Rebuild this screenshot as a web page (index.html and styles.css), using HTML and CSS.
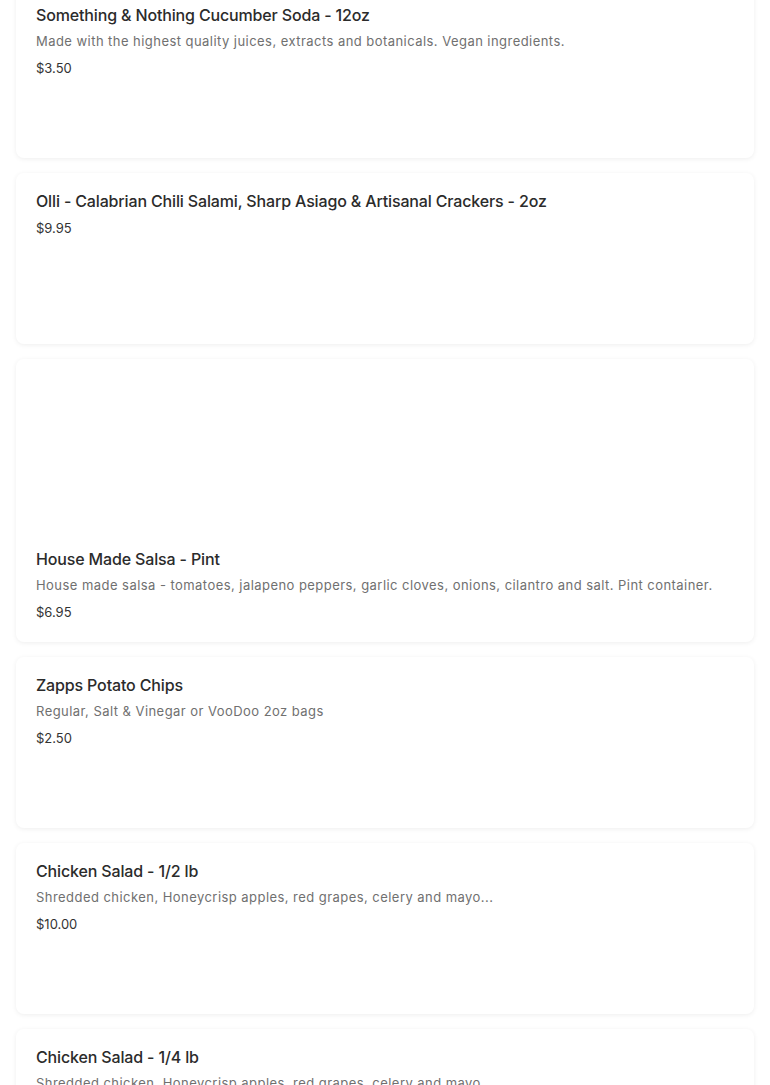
FILE: index.html
```html
<!DOCTYPE html>
<html lang="en">
<head>
  <meta charset="UTF-8" />
  <title>Menu</title>
  <link rel="stylesheet" href="styles.css">
</head>
<body>

  <div class="menu">
    <div class="item">
      <p class="title">Something &amp; Nothing Cucumber Soda - 12oz</p>
      <p class="desc">Made with the highest quality juices, extracts and botanicals. Vegan ingredients.</p>
      <p class="price">$3.50</p>
    </div>

    <div class="item">
      <p class="title">Olli - Calabrian Chili Salami, Sharp Asiago &amp; Artisanal Crackers - 2oz</p>
      <p class="price">$9.95</p>
    </div>

    <div class="item with-photo">
      <div class="photo"></div>
      <p class="title">House Made Salsa - Pint</p>
      <p class="desc">House made salsa - tomatoes, jalapeno peppers, garlic cloves, onions, cilantro and salt. Pint container.</p>
      <p class="price">$6.95</p>
    </div>

    <div class="item">
      <p class="title">Zapps Potato Chips</p>
      <p class="desc">Regular, Salt &amp; Vinegar or VooDoo 2oz bags</p>
      <p class="price">$2.50</p>
    </div>

    <div class="item">
      <p class="title">Chicken Salad - 1/2 lb</p>
      <p class="desc">Shredded chicken, Honeycrisp apples, red grapes, celery and mayo...</p>
      <p class="price">$10.00</p>
    </div>

    <div class="item">
      <p class="title">Chicken Salad - 1/4 lb</p>
      <p class="desc">Shredded chicken, Honeycrisp apples, red grapes, celery and mayo...</p>
      <p class="price">$6.00</p>
    </div>
  </div>

</body>
</html>
```

FILE: styles.css
```css
body {
  margin: 0;
  background: #fff;
  font-family: "Inter", "Liberation Sans", sans-serif;
  color: #2b2b2b;
}
.menu {
  display: flex;
  flex-direction: column;
  gap: 15px;
  margin: -13px 16px 0;
}
.item {
  box-sizing: border-box;
  min-height: 171px;
  padding: 16px 20px 20px;
  background: #fff;
  border-radius: 8px;
  box-shadow: 0 1px 5px rgba(0, 0, 0, 0.07);
}
.item p {
  margin: 0;
}
.photo {
  height: 172px;
  margin: -16px -20px 16px;
}
.title {
  font-size: 16px;
  font-weight: 500;
  line-height: 24px;
  letter-spacing: -0.15px;
}
.desc {
  margin-top: 4px !important;
  font-size: 13px;
  line-height: 20px;
  color: #707070;
  letter-spacing: 0.45px;
}
.price {
  margin-top: 7px !important;
  font-size: 13px;
  line-height: 20px;
  color: #333;
}
.title + .price {
  margin-top: 5px !important;
}
```
